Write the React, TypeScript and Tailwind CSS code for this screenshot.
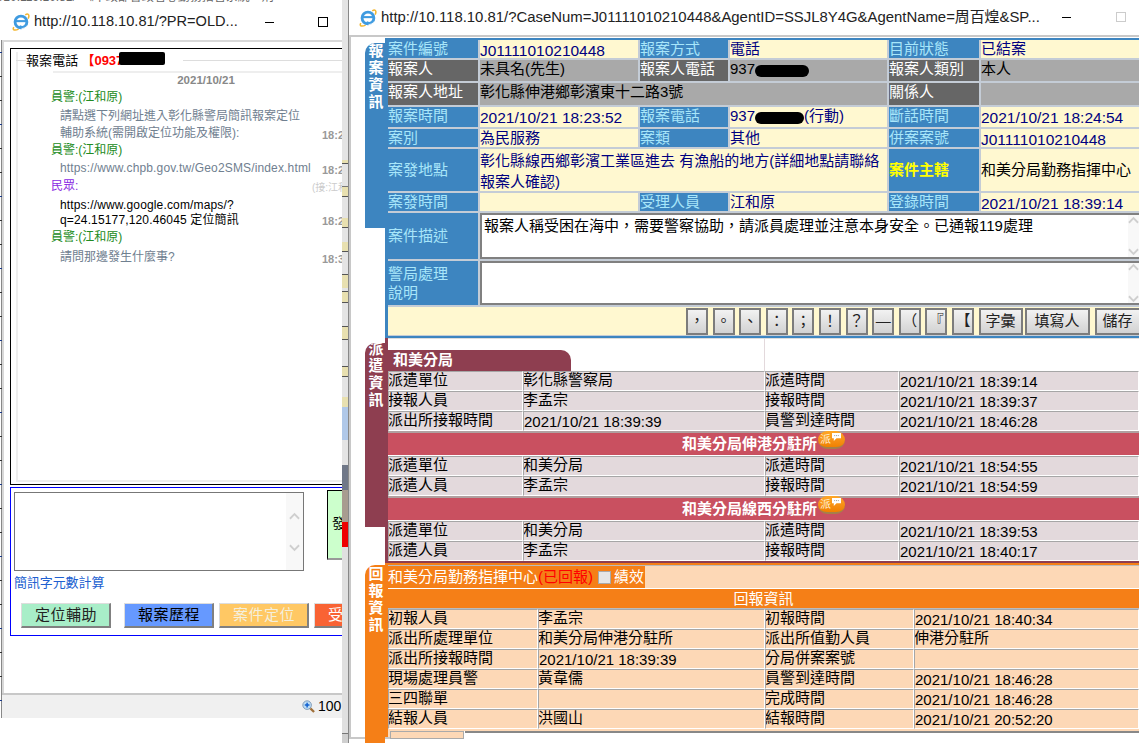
const font = "font-['Liberation_Sans','Noto_Sans_CJK_TC',sans-serif]";

function IeIcon({ className }: { className: string }) {
  return (
    <svg viewBox="0 0 20 20" className={className}>
      <path d="M3 16C1 19 4 20 8 18M15 3c3-2 5 0 3 4" fill="none" stroke="#f2b632" strokeWidth="1.6" />
      <circle cx="10.5" cy="10.5" r="6.2" fill="none" stroke="#3f9be0" strokeWidth="3" />
      <path d="M5 9.6h11" stroke="#3f9be0" strokeWidth="2.2" />
      <path d="M12 14.5h6l-3 3h-4z" fill="#ffffff" />
      <path d="M9 14.8c2 1.2 5 1 7-.8" fill="none" stroke="#3f9be0" strokeWidth="2" />
    </svg>
  );
}

function Scroll({ className }: { className: string }) {
  return (
    <div className={`flex flex-col items-center justify-center bg-[#f8f8f8] ${className}`}>
      <svg viewBox="0 0 12 8" className="w-[11px] h-[8px]">
        <path d="M1 7l5-5 5 5" fill="none" stroke="#cfcfcf" strokeWidth="2" />
      </svg>
      <svg viewBox="0 0 12 8" className="w-[11px] h-[8px] mt-[24px]">
        <path d="M1 1l5 5 5-5" fill="none" stroke="#cfcfcf" strokeWidth="2" />
      </svg>
    </div>
  );
}

function Msg({ who, color, time, children, h }: { who?: boolean; color: string; time?: string; children: React.ReactNode; h: string }) {
  return (
    <div className={`flex items-end ${h}`}>
      <div className={`w-[271px] shrink-0 ${who ? "" : "pl-[9px]"} ${color}`}>{children}</div>
      {time && <div className="text-[#999] font-bold text-[11px] leading-[14px] whitespace-nowrap">{time}</div>}
    </div>
  );
}

function ActionBtn({ label, className }: { label: string; className: string }) {
  return (
    <div className={`h-[25px] w-[90px] shrink-0 flex items-center text-[15px] tracking-[0.5px] border-r-2 border-b-2 border-[#808080] border-t border-t-[#ddd] border-l border-l-[#ddd] whitespace-nowrap pl-[13px] ${className}`}>
      {label}
    </div>
  );
}

function LeftWindow() {
  return (
    <div className="absolute left-[2px] top-[3px] w-[340px] h-[715px] bg-white flex flex-col overflow-hidden">
      <div className="h-[37px] shrink-0 flex items-center pl-[9px] relative">
        <IeIcon className="w-[19px] h-[19px]" />
        <span className="ml-[4px] text-[14.6px] text-[#222]">http://10.118.10.81/?PR=OLD...</span>
        <div className="absolute left-[263px] top-[19px] w-[9px] h-px bg-black" />
        <div className="absolute left-[316px] top-[14px] w-[10px] h-[10px] border border-black" />
      </div>
      <div className="flex-1 flex flex-col border-t-2 border-l-2 border-[#d8d8d8] pl-[6px] min-h-0">
        <div className="mt-[6px] h-[437px] border border-black border-r-0 shrink-0 overflow-hidden pl-[5px] pt-[3px]">
          <div className="h-[430px] border-2 border-r-0 border-t-0 border-[#eeeeee]">
            <div className="flex items-center h-[17px] -ml-[2px]">
              <div className="w-[10px] h-px bg-[#ddd]" />
              <span className="text-[13px] text-black tracking-[0.1px]">報案電話</span>
              <span className="text-[13px] text-[#ff0000] font-bold ml-[3px] relative whitespace-nowrap">
                【0937
                <span className="absolute left-[38px] top-[1px] w-[46px] h-[13px] bg-black rounded-[2px]" />
              </span>
              <div className="flex-1 h-px bg-[#ddd] ml-[60px]" />
            </div>
            <div className="ml-[35px] h-[2px] mt-[2px] bg-[#eeeeee]" />
            <div className="ml-[35px] h-[14px] w-[306px] text-center text-[11.5px] leading-[14px] font-bold text-[#888]">2021/10/21</div>
            <div className="ml-[33px] text-[12px] leading-[17px]">
              <Msg who h="h-[19px]" color="text-[#228b22]">員警:(江和原)</Msg>
              <Msg h="h-[36px]" color="text-[#708090]" time="18:27">
                請點選下列網址進入彰化縣警局簡訊報案定位
                <br />
                輔助系統(需開啟定位功能及權限):
              </Msg>
              <Msg who h="h-[17px]" color="text-[#228b22]">員警:(江和原)</Msg>
              <Msg h="h-[18px]" color="text-[#708090] tracking-[0.15px] whitespace-nowrap" time="18:27">https://www.chpb.gov.tw/Geo2SMS/index.html</Msg>
              <div className="flex items-end h-[18px] text-[#8a2be2]">
                <div className="w-[261px] shrink-0">民眾:</div>
                <div className="text-[#ccc] text-[10px] leading-[14px] whitespace-nowrap">(接:江和原)</div>
              </div>
              <Msg h="h-[33px]" color="text-black leading-[15px] tracking-[0.15px] whitespace-nowrap" time="18:28">
                https://www.google.com/maps/?
                <br />
                q=24.15177,120.46045 定位簡訊
              </Msg>
              <Msg who h="h-[18px]" color="text-[#228b22]">員警:(江和原)</Msg>
              <Msg h="h-[20px]" color="text-[#708090]" time="18:30">請問那邊發生什麼事?</Msg>
            </div>
          </div>
        </div>
        <div className="mt-[2px] h-[149px] shrink-0 border border-[#0000ff] border-r-0 pl-[3px] pt-[4px] relative">
          <div className="w-[290px] h-[79px] border border-[#777] flex justify-end bg-white">
            <Scroll className="w-[17px]" />
          </div>
          <div className="absolute left-[316px] top-[2px] w-[30px] h-[70px] border border-black border-b-[2px] border-b-[#999] bg-[#ccffcc] text-[14px] pt-[22px] pl-[4px]">發</div>
          <div className="mt-[4px] text-[13px] leading-[15px] text-[#2060d0] tracking-[-0.1px]">簡訊字元數計算</div>
          <div className="flex mt-[13px] ml-[7px] gap-[5px]">
            <ActionBtn label="定位輔助" className="mr-[8px] bg-[#a8eec8] text-[#222]" />
            <ActionBtn label="報案歷程" className="bg-[#6699ff] text-black" />
            <ActionBtn label="案件定位" className="bg-[#ffc864] text-[#f4efdd]" />
            <ActionBtn label="受理" className="bg-[#f96334] text-white" />
          </div>
        </div>
        <div className="flex-1" />
        <div className="h-[25px] -ml-[8px] shrink-0 bg-[#f0f0f0] border-t-2 border-[#c8c8c8] flex items-center pl-[300px]">
          <svg viewBox="0 0 14 14" className="w-[13px] h-[13px] shrink-0">
            <path d="M9 9l4 4" stroke="#a0703a" strokeWidth="2.4" />
            <circle cx="5.5" cy="5.5" r="4.6" fill="#bcdcf4" stroke="#7a96b4" />
            <path d="M3 5.5h5M5.5 3v5" stroke="#1060d0" strokeWidth="1.6" />
          </svg>
          <span className="ml-[3px] text-[14px] text-black">100</span>
        </div>
      </div>
    </div>
  );
}

// what shows of the windows behind, between the two popups
const behind: [string, string][] = [
  ["h-[160px]", "bg-[#e4e4e4]"],
  ["h-[4px]", "bg-[#e8e0b0] border-b border-[#555]"],
  ["h-[23px]", "bg-[#e4e4e4] border-b border-[#777]"],
  ["h-[10px]", "bg-[#e8e0b0] border-b border-[#555]"],
  ["h-[21px]", "bg-[#e4e4e4]"],
  ["h-[10px]", "bg-[#e8e0b0] border-b border-[#555]"],
  ["h-[14px]", "bg-[#e4e4e4]"],
  ["h-[10px]", "bg-[#e8e0b0] border-b border-[#555]"],
  ["h-[23px]", "bg-[#e4e4e4] border-b border-[#555]"],
  ["h-[13px]", "bg-[#e8e0b0]"],
  ["h-[4px]", "bg-[#e4e4e4] border-b border-[#555]"],
  ["h-[11px]", "bg-[#e8e0b0] border-b border-[#555]"],
  ["h-[24px]", "bg-[#e4e4e4] border-b border-[#555]"],
  ["h-[13px]", "bg-[#e8e0b0] border-b border-[#555]"],
  ["h-[27px]", "bg-[#e4e4e4] border-b border-[#555]"],
  ["h-[10px]", "bg-[#e8e0b0] border-b border-[#555]"],
  ["h-[20px]", "bg-[#e4e4e4]"],
  ["h-[10px]", "bg-[#e8e0b0]"],
  ["h-[33px]", "bg-[#b0c8e8]"],
  ["h-[25px]", "bg-[#e4e4e4]"],
  ["h-[25px]", "bg-[#707888]"],
  ["h-[32px]", "bg-[#a89c90]"],
  ["h-[25px]", "bg-[#ee0000]"],
  ["h-[186px]", "bg-[#e0e0e0]"],
  ["h-[10px]", "bg-[#cfcfcf] border-t border-[#777]"],
];

function Behind() {
  const ticks = Array.from({ length: 28 }, (_, i) => i);
  return (
    <>
      <div className="absolute left-0 top-[-10px] w-[342px] overflow-hidden whitespace-nowrap text-[12px] text-[#666] leading-[14px]">/10.119.10.81/　《中政部警政署心勤務指管系統，刑</div>
      <div className="absolute left-[1px] top-[40px] w-px h-[678px] bg-[#888]" />
      <div className="absolute left-0 top-[40px] w-[2px] h-[678px] flex flex-col gap-[23px] pt-[12px]">
        {ticks.map((i) => (
          <div key={i} className={`h-px shrink-0 ${i % 3 === 0 ? "bg-[#1a3a8a]" : "bg-[#333]"}`} />
        ))}
      </div>
      <div className="absolute left-[342px] top-0 w-[6px] h-[743px] flex flex-col overflow-hidden">
        {behind.map(([h, c], i) => (
          <div key={i} className={`shrink-0 box-border ${h} ${c}`} />
        ))}
      </div>
    </>
  );
}

function SideTab({ label, color, h, top, shift }: { label: string; color: string; h: string; top: string; shift: string }) {
  return (
    <div className={`w-[20px] shrink-0 rounded-tl-[10px] overflow-hidden text-white font-bold text-[15px] leading-[17px] text-center pl-[2px] ${color} ${h} ${top}`}>
      <div className={shift}>
        {label.split("").map((c) => (
          <div key={c}>{c}</div>
        ))}
      </div>
    </div>
  );
}

type Cell = { t: string; kind: "b" | "v" | "g" | "d" | "time" | "y"; span?: string; blot?: string; suffix?: string };

const topRows: Cell[][] = [
  [{ t: "案件編號", kind: "b" }, { t: "J01111010210448", kind: "time" }, { t: "報案方式", kind: "b" }, { t: "電話", kind: "v" }, { t: "目前狀態", kind: "b" }, { t: "已結案", kind: "v" }],
  [{ t: "報案人", kind: "d" }, { t: "未具名(先生)", kind: "g" }, { t: "報案人電話", kind: "d" }, { t: "937", kind: "g", blot: "w-[54px]" }, { t: "報案人類別", kind: "d" }, { t: "本人", kind: "g" }],
  [{ t: "報案人地址", kind: "d" }, { t: "彰化縣伸港鄉彰濱東十二路3號", kind: "g", span: "col-span-3" }, { t: "關係人", kind: "d" }, { t: "", kind: "g" }],
  [{ t: "報案時間", kind: "b" }, { t: "2021/10/21 18:23:52", kind: "time" }, { t: "報案電話", kind: "b" }, { t: "937", kind: "v", blot: "w-[49px]", suffix: "(行動)" }, { t: "斷話時間", kind: "b" }, { t: "2021/10/21 18:24:54", kind: "time" }],
  [{ t: "案別", kind: "b" }, { t: "為民服務", kind: "v" }, { t: "案類", kind: "b" }, { t: "其他", kind: "v" }, { t: "併案案號", kind: "b" }, { t: "J01111010210448", kind: "time" }],
];

const cellStyle: Record<Cell["kind"], string> = {
  b: "bg-[#3d85c0] text-[#a8e6fa]",
  v: "bg-[#fff8d0] text-[#000080]",
  time: "bg-[#fff8d0] text-[#000080] text-[15.5px] pt-[2px]",
  g: "bg-[#a9a9a9] text-black",
  d: "bg-[#666666] text-white",
  y: "bg-[#3d85c0] text-[#ffff00] font-bold",
};

function TopCell({ c }: { c: Cell }) {
  return (
    <div className={`whitespace-nowrap overflow-hidden leading-[18px] flex items-start ${cellStyle[c.kind]} ${c.span ?? ""}`}>
      {c.t}
      {c.blot && <span className={`h-[12px] mt-[5px] bg-black rounded-full shrink-0 ${c.blot}`} />}
      {c.suffix}
    </div>
  );
}

function TextBox({ text }: { text?: string }) {
  return (
    <div className="col-span-5 bg-white border-2 border-[#808080] border-r-0 flex overflow-hidden">
      <div className="flex-1 pl-[2px] pt-[1px] text-black leading-[20px] whitespace-nowrap">{text}</div>
      <Scroll className="w-[11px] shrink-0" />
    </div>
  );
}

function Key({ label, className }: { label: string; className: string }) {
  return (
    <div className={`h-[27px] shrink-0 flex items-center justify-center border-2 border-[#7c7c7c] bg-gradient-to-b from-[#f2f2f2] to-[#d2d2d2] text-[15px] text-[#222] whitespace-nowrap ${className}`}>
      {label}
    </div>
  );
}

function CaseSection() {
  const marks = ["，", "。", "、", "：", "；", "！", "？", "—", "（", "『", "【"];
  return (
    <div className="flex">
      <SideTab label="報案資訊" color="bg-[#3d85c0]" h="h-[185px]" top="mt-[5px]" shift="-mt-[1px]" />
      <div className="flex-1 min-w-0 border-l-[3px] border-t-2 border-b-2 border-[#3d85c0] bg-[#c4ccd6]">
        <div className="grid grid-cols-[90px_158px_88px_157px_90px_1fr] grid-rows-[18px_21px_22px_20px_18px_42px_18px_46px_44px_28px] gap-[2px] h-[296px] text-[15px]">
          {topRows.slice(0, 5).flat().map((c, i) => (
            <TopCell key={i} c={c} />
          ))}
          <div className={`flex items-center ${cellStyle.b}`}>案發地點</div>
          <div className={`col-span-3 leading-[21px] pt-[1px] ${cellStyle.v}`}>彰化縣線西鄉彰濱工業區進去 有漁船的地方(詳細地點請聯絡報案人確認)</div>
          <div className={`flex items-center ${cellStyle.y}`}>案件主轄</div>
          <div className={`flex items-center whitespace-nowrap overflow-hidden ${cellStyle.v} !text-black`}>和美分局勤務指揮中心</div>
          <TopCell c={{ t: "案發時間", kind: "b" }} />
          <TopCell c={{ t: "", kind: "v" }} />
          <TopCell c={{ t: "受理人員", kind: "b" }} />
          <TopCell c={{ t: "江和原", kind: "v" }} />
          <TopCell c={{ t: "登錄時間", kind: "b" }} />
          <TopCell c={{ t: "2021/10/21 18:39:14", kind: "time" }} />
          <div className={`flex items-center ${cellStyle.b}`}>案件描述</div>
          <TextBox text="報案人稱受困在海中，需要警察協助，請派員處理並注意本身安全。已通報119處理" />
          <div className={`flex items-center leading-[19px] ${cellStyle.b}`}>警局處理<br />說明</div>
          <TextBox />
          <div className="col-span-6 bg-[#fff8d0] flex items-center pl-[298px]">
            {marks.map((m) => (
              <Key key={m} label={m} className="w-[22px] mr-[4.6px]" />
            ))}
            <Key label="字彙" className="w-[44px] mr-[2px]" />
            <Key label="填寫人" className="w-[65px] mr-[5px]" />
            <Key label="儲存" className="w-[46px]" />
          </div>
        </div>
      </div>
    </div>
  );
}

function InsetCell({ children, className = "" }: { children?: React.ReactNode; className?: string }) {
  return (
    <div className={`border border-t-[#a6a6a6] border-l-[#a6a6a6] border-b-white border-r-white whitespace-nowrap overflow-hidden text-[15px] leading-[15px] text-black ${className}`}>
      {children}
    </div>
  );
}

function Stamp() {
  return (
    <span className="relative -top-[4px] ml-[1px] w-[27px] h-[18px] rounded-full bg-gradient-to-b from-[#ffa726] to-[#f08000] border-b-2 border-[#a5804a] flex items-center shrink-0 overflow-hidden">
      <span className="text-[11px] font-normal leading-none pl-[2px] text-[#fff2d8]">派</span>
      <svg viewBox="0 0 12 10" className="w-[11px] h-[9px] -mt-[5px]">
        <path d="M1 1h10v6H6l-3 3V7H1z" fill="#ffffff" />
        <path d="M3.5 4h1M5.5 4h1M7.5 4h1" stroke="#888" />
      </svg>
    </span>
  );
}

function Pair({ a, b, c, d, cols, bg }: { a: string; b: string; c: string; d: string; cols: string; bg: string }) {
  // dates sit a little lower and further right than the CJK labels
  const style = (s: string) => (/^2021/.test(s) ? "text-[15.5px] pt-[1px] !leading-[17px]" : "indent-[-1px]");
  return (
    <div className={`grid h-[20px] ${cols} ${bg}`}>
      <InsetCell className="indent-[-1px]">{a}</InsetCell>
      <InsetCell className={style(b)}>{b}</InsetCell>
      <InsetCell className="indent-[-1px]">{c}</InsetCell>
      <InsetCell className={style(d)}>{d}</InsetCell>
    </div>
  );
}

function StationHeader({ name }: { name: string }) {
  return (
    <div className="h-[25px] bg-[#c95060] border-t-2 border-[#b0a0a0] border-b border-b-white flex items-center justify-center text-white font-bold text-[15px]">
      {name}
      <Stamp />
    </div>
  );
}

function DispatchSection() {
  const cols = "grid-cols-[135px_242px_134px_1fr]";
  const bg = "bg-[#e3d9dc]";
  return (
    <div className="flex">
      <SideTab label="派遣資訊" color="bg-[#8e3e50]" h="h-[184px]" top="mt-[5px]" shift="-mt-[3px]" />
      <div className="flex-1 min-w-0 border-l-[3px] border-b-2 border-[#8e3e50]">
        <div className="h-[33px] flex flex-col justify-end relative border-t border-[#ddd]">
          <div className="absolute left-[376px] top-0 bottom-0 w-px bg-[#e3d9dc]" />
          <div className="w-[183px] h-[21px] bg-[#8e3e50] rounded-tr-[10px] text-white font-bold text-[15px] leading-[20px] pl-[5px]">和美分局</div>
        </div>
        <Pair cols={cols} bg={bg} a="派遣單位" b="彰化縣警察局" c="派遣時間" d="2021/10/21 18:39:14" />
        <Pair cols={cols} bg={bg} a="接報人員" b="李孟宗" c="接報時間" d="2021/10/21 18:39:37" />
        <Pair cols={cols} bg={bg} a="派出所接報時間" b="2021/10/21 18:39:39" c="員警到達時間" d="2021/10/21 18:46:28" />
        <StationHeader name="和美分局伸港分駐所" />
        <Pair cols={cols} bg={bg} a="派遣單位" b="和美分局" c="派遣時間" d="2021/10/21 18:54:55" />
        <Pair cols={cols} bg={bg} a="派遣人員" b="李孟宗" c="接報時間" d="2021/10/21 18:54:59" />
        <StationHeader name="和美分局線西分駐所" />
        <Pair cols={cols} bg={bg} a="派遣單位" b="和美分局" c="派遣時間" d="2021/10/21 18:39:53" />
        <Pair cols={cols} bg={bg} a="派遣人員" b="李孟宗" c="接報時間" d="2021/10/21 18:40:17" />
      </div>
    </div>
  );
}

function ReportSection() {
  const cols = "grid-cols-[150px_227px_149px_1fr]";
  const bg = "bg-[#fdd8b6]";
  return (
    <div className="flex flex-1 min-h-0">
      <SideTab label="回報資訊" color="bg-[#f57f17]" h="h-[180px]" top="mt-[2px]" shift="" />
      <div className="flex-1 min-w-0 border-l-[3px] border-t-2 border-[#f57f17] bg-[#fdd8b6]">
        <div className="h-[24px] border-t border-[#bbb] border-b border-b-white">
          <div className="w-[257px] h-full bg-[#f57f17] text-white text-[15px] leading-[22px] flex items-center whitespace-nowrap">
            和美分局勤務指揮中心<span className="text-[#ff0000]">(已回報)</span>
            <span className="w-[13px] h-[13px] bg-[#e6e6e6] border border-[#aaa] ml-[5px] mr-[3px]" />
            績效
          </div>
        </div>
        <div className="h-[20px] bg-[#f57f17] text-white text-[15px] leading-[19px] text-center border-b border-[#bbb]">回報資訊</div>
        <Pair cols={cols} bg={bg} a="初報人員" b="李孟宗" c="初報時間" d="2021/10/21 18:40:34" />
        <Pair cols={cols} bg={bg} a="派出所處理單位" b="和美分局伸港分駐所" c="派出所值勤人員" d="伸港分駐所" />
        <Pair cols={cols} bg={bg} a="派出所接報時間" b="2021/10/21 18:39:39" c="分局併案案號" d="" />
        <Pair cols={cols} bg={bg} a="現場處理員警" b="黃韋儒" c="員警到達時間" d="2021/10/21 18:46:28" />
        <Pair cols={cols} bg={bg} a="三四聯單" b="" c="完成時間" d="2021/10/21 18:46:28" />
        <Pair cols={cols} bg={bg} a="結報人員" b="洪國山" c="結報時間" d="2021/10/21 20:52:20" />
        <div className="flex mt-[2px] ml-[2px] h-[8px] bg-white">
          <div className="w-[74px] bg-[#fdd8b6] border border-[#aaa] mr-px" />
          <div className="flex-1 border-t-2 border-[#888]" />
        </div>
      </div>
    </div>
  );
}

function RightWindow() {
  return (
    <div className="absolute left-[348px] top-0 w-[791px] h-[743px] bg-white flex flex-col overflow-hidden border-l border-[#888]">
      <div className="h-[35px] shrink-0 flex items-center pl-[9px] relative pb-[1px]">
        <IeIcon className="w-[19px] h-[19px]" />
        <span className="ml-[4px] text-[14.9px] text-[#222] whitespace-nowrap">
          http://10.118.10.81/?CaseNum=J01111010210448&amp;AgentID=SSJL8Y4G&amp;AgentName=周百煌&amp;SP...
        </span>
        <div className="absolute left-[713px] top-[17px] w-[9px] h-px bg-black" />
        <div className="absolute left-[767px] top-[12px] w-[10px] h-[10px] border border-[#ccc]" />
      </div>
      <div className="flex-1 min-h-0 flex flex-col border-t-2 border-[#c8c8c8] border-l-2 border-b-2 pl-[14px] mb-[4px]">
        <div className="pt-px">
          <CaseSection />
        </div>
        <DispatchSection />
        <ReportSection />
      </div>
    </div>
  );
}

export default function App() {
  return (
    <div className={`relative w-[1139px] h-[743px] overflow-hidden bg-white ${font}`}>
      <Behind />
      <LeftWindow />
      <RightWindow />
    </div>
  );
}
